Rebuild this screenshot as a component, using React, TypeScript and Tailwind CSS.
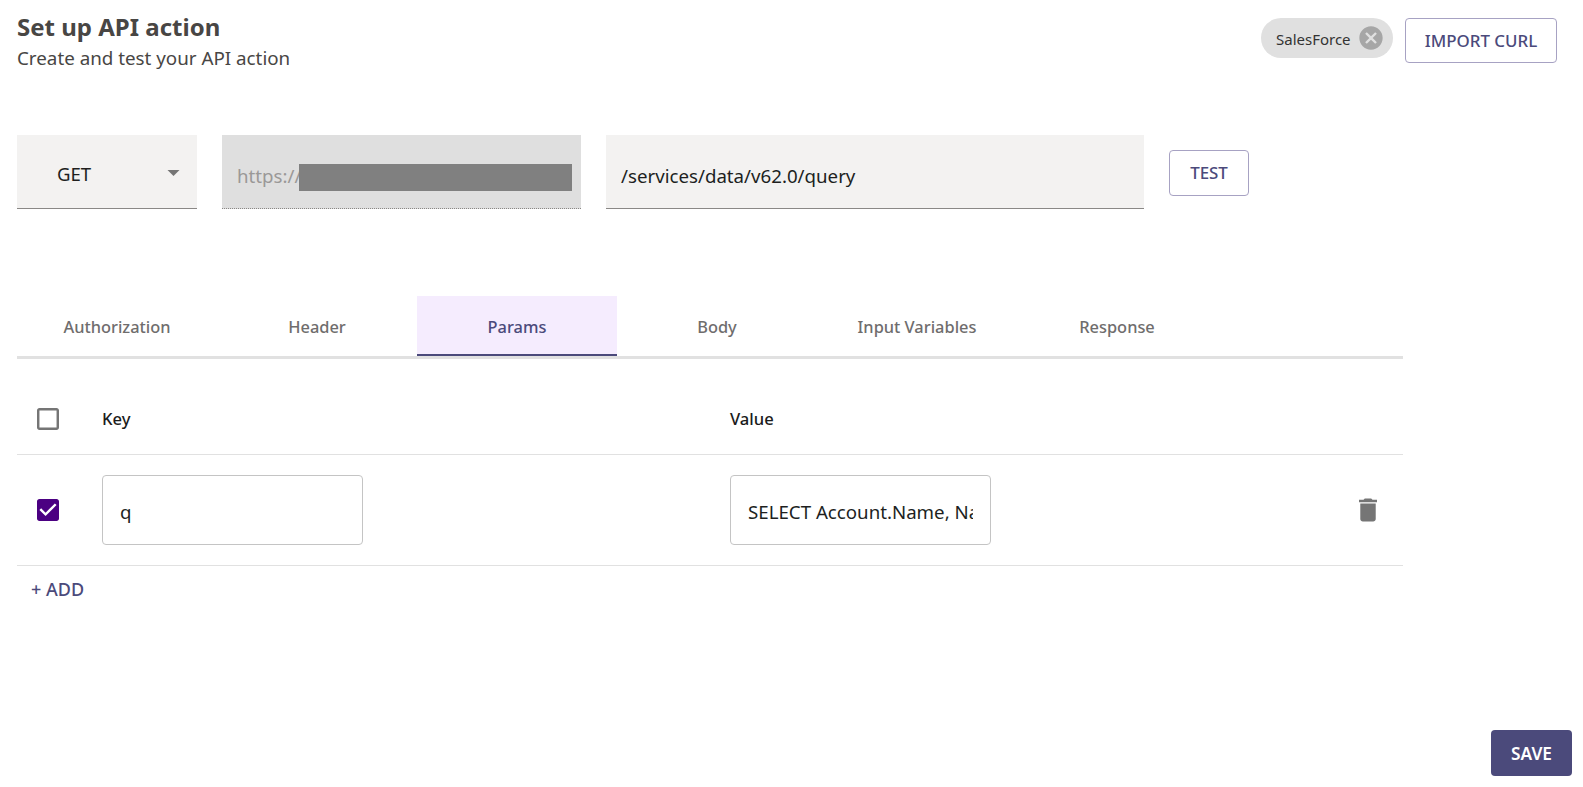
import React from "react";

const F = "font-['Noto_Sans',sans-serif]";

const Tab = ({ label, active }: { label: string; active?: boolean }) => (
  <div
    className={
      active
        ? "w-[200px] h-[60px] pt-[4px] flex items-center justify-center bg-[#f5ecfe] border-b-[2px] border-[#4b4a7b] text-[#4b4a7b] text-[16.4px] font-medium"
        : "w-[200px] h-[60px] pt-[2px] flex items-center justify-center text-[#6f6d6d] text-[16.4px] font-medium"
    }
  >
    {label}
  </div>
);

export default function App() {
  return (
    <div className={`${F} h-screen w-full bg-white flex flex-col overflow-hidden pl-[17px] pr-[11px] text-[#201f1e]`}>
      <div className="flex justify-between items-start pt-[10px] pr-[15px]">
        <div>
          <h1 className="text-[24px] leading-[33px] font-bold text-[#484644]">Set up API action</h1>
          <p className="text-[18.8px] leading-[30px] text-[#484644]">Create and test your API action</p>
        </div>
        <div className="flex gap-[12px] pt-[8px]">
          <div className="h-[40px] w-[132px] rounded-full bg-[#e0e0e0] flex items-center pl-[15px] pr-[8px] justify-between">
            <span className="text-[15px] pt-[2px] text-[#333]">SalesForce</span>
            <svg viewBox="0 0 24 24" className="w-[28px] h-[28px] fill-[#a6a6a6]">
              <path d="M12 2C6.47 2 2 6.47 2 12s4.47 10 10 10 10-4.47 10-10S17.53 2 12 2zm5 13.59L15.59 17 12 13.41 8.41 17 7 15.59 10.59 12 7 8.41 8.41 7 12 10.59 15.59 7 17 8.41 13.41 12 17 15.59z" />
            </svg>
          </div>
          <button className="h-[45px] w-[152px] rounded-[4px] border border-[#a7a2c3] text-[#4b4a7b] text-[16.9px] font-medium">
            IMPORT CURL
          </button>
        </div>
      </div>

      <div className="flex items-center gap-[25px] mt-[62px]">
        <div className="relative w-[180px] h-[74px] pt-[5px] bg-[#f3f2f1] border-b border-[#8a8886] flex items-center pl-[40px] text-[18.6px]">
          GET
          <svg viewBox="7 10 10 5" className="absolute left-[150px] top-[35px] w-[13px] h-[6px] fill-[#757575]">
            <path d="M7 10l5 5 5-5z" />
          </svg>
        </div>
        <div className="relative w-[359px] h-[74px] pt-[9px] bg-[#dfdfdf] border-b border-dotted border-[#8a8886] flex items-center pl-[15px] text-[18.7px] text-[#9a9897]">
          https://
          <div className="absolute left-[77px] top-[29px] w-[273px] h-[27px] bg-[#808080]" />
        </div>
        <div className="w-[538px] h-[74px] pt-[9px] bg-[#f3f2f1] border-b border-[#8a8886] flex items-center pl-[15px] text-[18.7px]">
          /services/data/v62.0/query
        </div>
        <button className="h-[46px] w-[80px] mt-[2px] rounded-[4px] border border-[#a7a2c3] text-[#4b4a7b] text-[16.9px] font-medium">
          TEST
        </button>
      </div>

      <div className="w-[1386px] mt-[87px]">
        <div className="flex h-[63px] border-b-[3px] border-[#e1e1e1]">
          <Tab label="Authorization" />
          <Tab label="Header" />
          <Tab label="Params" active />
          <Tab label="Body" />
          <Tab label="Input Variables" />
          <Tab label="Response" />
        </div>

        <div className="grid grid-cols-[85px_628px_1fr] items-center h-[96px] pt-[25px] border-b border-[#e1e1e1] text-[16.6px] font-medium text-[#1b1b1b]">
          <svg viewBox="3 3 18 18" className="ml-[20px] w-[22px] h-[22px] fill-[#757575]">
            <path d="M19 5v14H5V5h14m0-2H5c-1.1 0-2 .9-2 2v14c0 1.1.9 2 2 2h14c1.1 0 2-.9 2-2V5c0-1.1-.9-2-2-2z" />
          </svg>
          <span>Key</span>
          <span>Value</span>
        </div>

        <div className="grid grid-cols-[85px_628px_1fr] items-center h-[111px] border-b border-[#e1e1e1]">
          <svg viewBox="3 3 18 18" className="ml-[20px] w-[22px] h-[22px] fill-[#4b0082]">
            <path d="M19 3H5c-1.11 0-2 .9-2 2v14c0 1.1.89 2 2 2h14c1.11 0 2-.9 2-2V5c0-1.1-.89-2-2-2zm-9 14l-5-5 1.41-1.41L10 14.17l7.59-7.59L19 8l-9 9z" />
          </svg>
          <input
            readOnly
            defaultValue="q"
            className="w-[261px] h-[70px] pt-[2px] rounded-[4px] border border-[#c4c4c4] px-[17px] text-[18.7px] outline-none"
          />
          <div className="flex items-center justify-between pr-[26px]">
            <input
              readOnly
              defaultValue="SELECT Account.Name, Name FROM Account"
              className="w-[261px] h-[70px] pt-[2px] rounded-[4px] border border-[#c4c4c4] px-[17px] text-[18.7px] outline-none"
            />
            <svg viewBox="5 3 14 18" className="w-[18px] h-[24px] fill-[#757575]">
              <path d="M6 19c0 1.1.9 2 2 2h8c1.1 0 2-.9 2-2V7H6v12zM19 4h-3.5l-1-1h-5l-1 1H5v2h14V4z" />
            </svg>
          </div>
        </div>

        <div className="pl-[14px] pt-[10px] text-[18px] font-medium text-[#4b4a7b]">+ ADD</div>
      </div>

      <div className="mt-auto flex justify-end pb-[11px]">
        <button className="h-[46px] w-[81px] pt-[2px] rounded-[4px] bg-[#4b4a7b] text-white text-[17.3px] font-semibold">
          SAVE
        </button>
      </div>
    </div>
  );
}
